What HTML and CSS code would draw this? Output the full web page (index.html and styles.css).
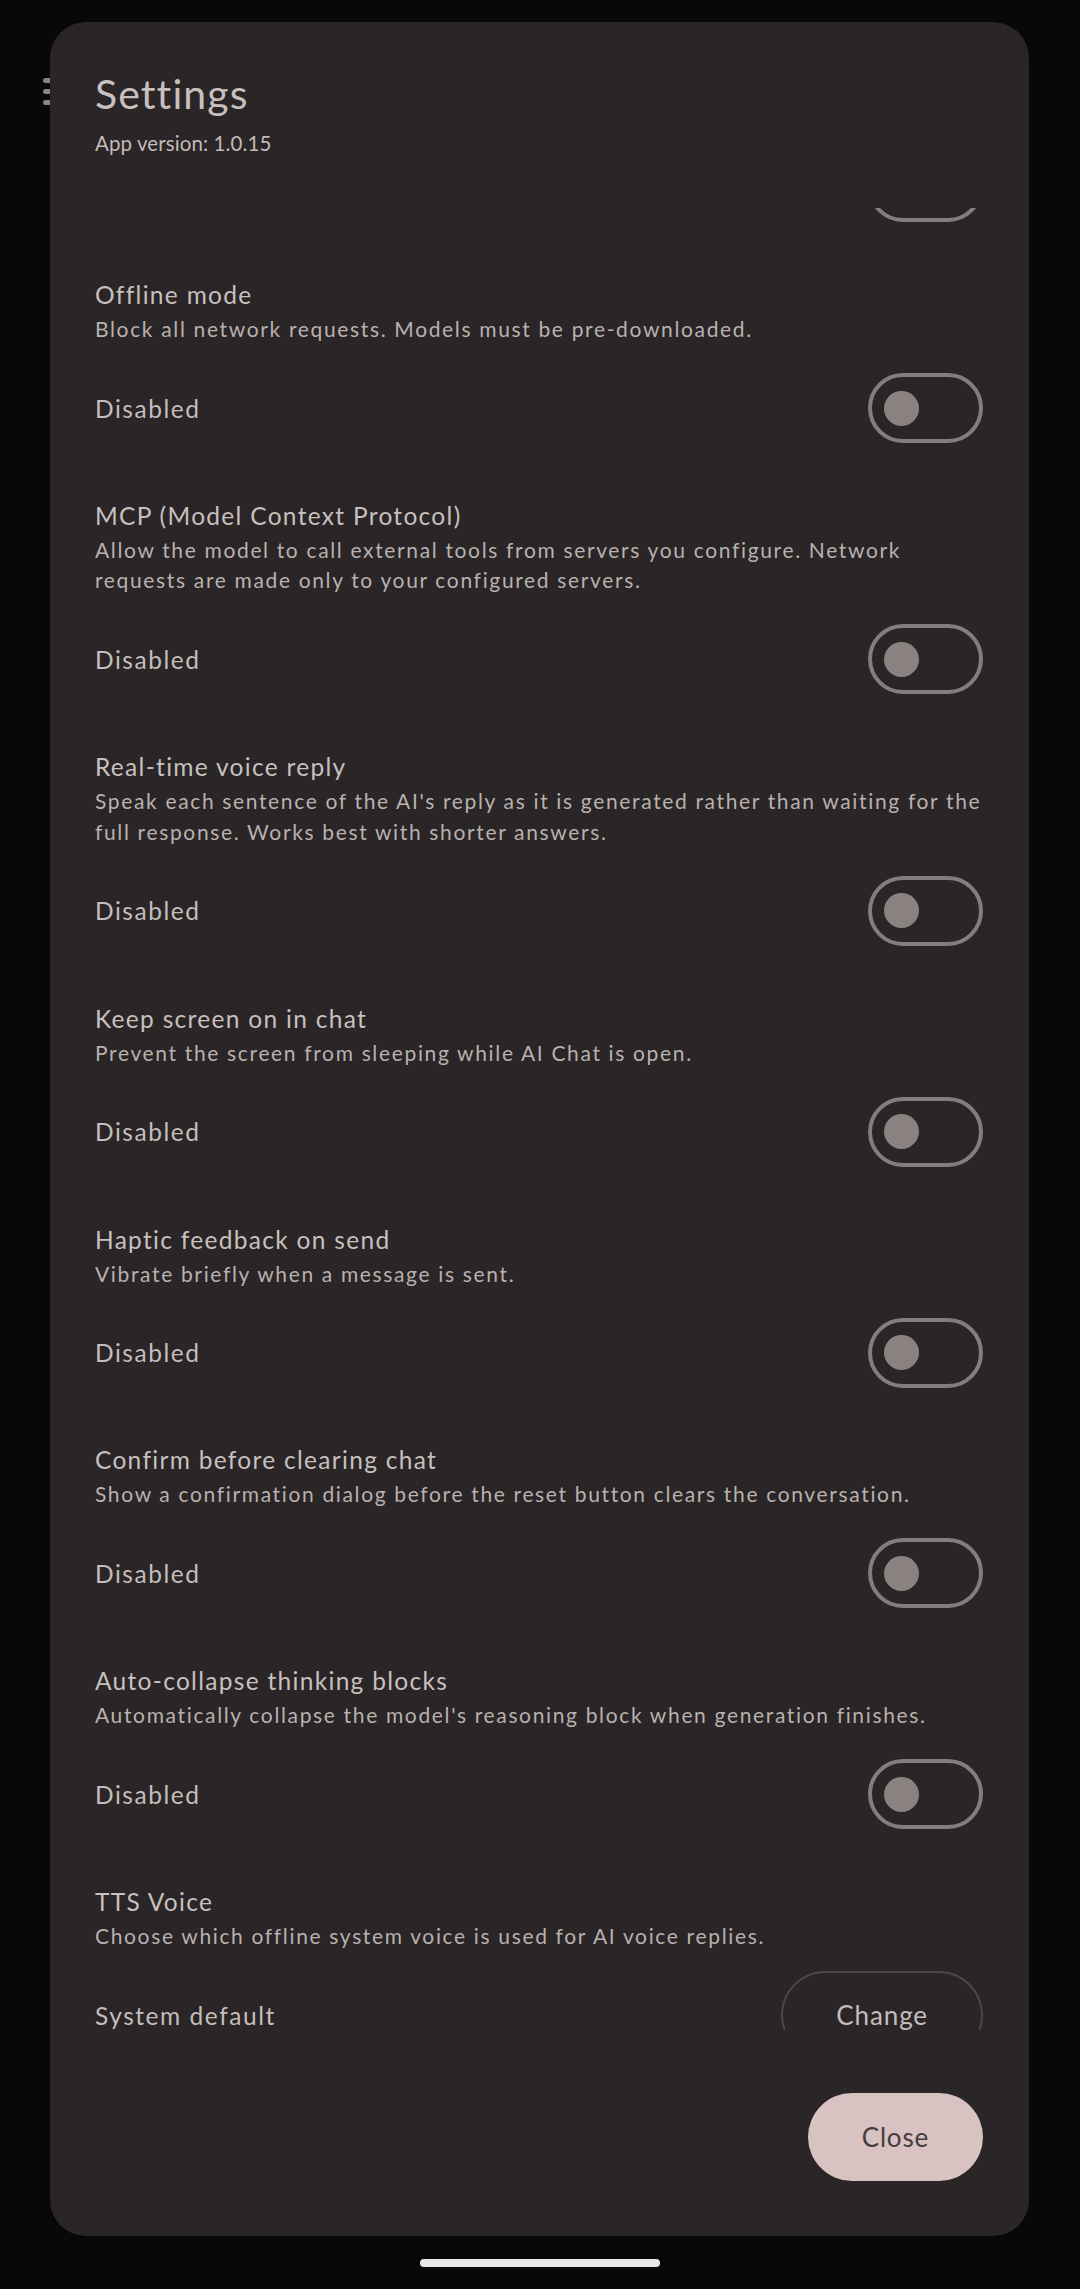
FILE: index.html
```html
<!DOCTYPE html>
<html lang="en">
<head>
<meta charset="utf-8">
<title>Settings</title>
<link rel="stylesheet" href="styles.css">
</head>
<body>
<div class="screen">
  <div class="menu-icon"><span></span><span></span><span></span></div>
  <div class="dialog">
    <header class="dialog-head">
      <h1 class="dialog-title">Settings</h1>
      <p class="app-version">App version: 1.0.15</p>
    </header>
    <div class="scroll">
      <div class="scroll-inner">
        <div class="row row-hidden"><span class="switch"><span class="thumb"></span></span></div>
        <section class="setting">
          <h2 class="setting-title">Offline mode</h2>
          <p class="setting-desc">Block all network requests. Models must be pre-downloaded.</p>
          <div class="row"><span class="value">Disabled</span><span class="switch"><span class="thumb"></span></span></div>
        </section>
        <section class="setting">
          <h2 class="setting-title">MCP (Model Context Protocol)</h2>
          <p class="setting-desc">Allow the model to call external tools from servers you configure. Network requests are made only to your configured servers.</p>
          <div class="row"><span class="value">Disabled</span><span class="switch"><span class="thumb"></span></span></div>
        </section>
        <section class="setting">
          <h2 class="setting-title">Real-time voice reply</h2>
          <p class="setting-desc">Speak each sentence of the AI's reply as it is generated rather than waiting for the full response. Works best with shorter answers.</p>
          <div class="row"><span class="value">Disabled</span><span class="switch"><span class="thumb"></span></span></div>
        </section>
        <section class="setting">
          <h2 class="setting-title">Keep screen on in chat</h2>
          <p class="setting-desc">Prevent the screen from sleeping while AI Chat is open.</p>
          <div class="row"><span class="value">Disabled</span><span class="switch"><span class="thumb"></span></span></div>
        </section>
        <section class="setting">
          <h2 class="setting-title">Haptic feedback on send</h2>
          <p class="setting-desc">Vibrate briefly when a message is sent.</p>
          <div class="row"><span class="value">Disabled</span><span class="switch"><span class="thumb"></span></span></div>
        </section>
        <section class="setting">
          <h2 class="setting-title">Confirm before clearing chat</h2>
          <p class="setting-desc">Show a confirmation dialog before the reset button clears the conversation.</p>
          <div class="row"><span class="value">Disabled</span><span class="switch"><span class="thumb"></span></span></div>
        </section>
        <section class="setting">
          <h2 class="setting-title">Auto-collapse thinking blocks</h2>
          <p class="setting-desc">Automatically collapse the model's reasoning block when generation finishes.</p>
          <div class="row"><span class="value">Disabled</span><span class="switch"><span class="thumb"></span></span></div>
        </section>
        <section class="setting">
          <h2 class="setting-title">TTS Voice</h2>
          <p class="setting-desc">Choose which offline system voice is used for AI voice replies.</p>
          <div class="row"><span class="value">System default</span><button class="btn-outline">Change</button></div>
        </section>
      </div>
    </div>
    <footer class="dialog-foot">
      <button class="btn-tonal">Close</button>
    </footer>
  </div>
  <div class="home-bar"></div>
</div>
</body>
</html>
```

FILE: styles.css
```css
* { box-sizing: border-box; }
html, body {
  margin: 0;
  padding: 0;
  background: #080808;
}
body {
  width: 1080px;
  height: 2289px;
  overflow: hidden;
  font-family: Lato, "Noto Sans", sans-serif;
  color: #c5bdbb;
}
.screen {
  position: relative;
  width: 1080px;
  height: 2289px;
  padding-top: 22px;
}
.menu-icon {
  position: absolute;
  left: 43px;
  top: 78px;
  width: 30px;
  display: flex;
  flex-direction: column;
  gap: 6px;
}
.menu-icon span {
  display: block;
  height: 5px;
  border-radius: 3px;
  background: #8b8482;
}
.dialog {
  position: relative;
  margin: 0 51px 0 50px;
  height: 2214px;
  background: #2a2526;
  border-radius: 36px;
  padding: 0 46px 0 45px;
  display: flex;
  flex-direction: column;
}
.dialog-head { padding-top: 46px; }
.dialog-title {
  margin: 0;
  font-size: 41px;
  line-height: 52px;
  font-weight: 400;
  letter-spacing: 1.1px;
  color: #c8c0be;
}
.app-version {
  margin: 9px 0 0;
  font-size: 20.5px;
  line-height: 28px;
  letter-spacing: 0.1px;
  color: #c2bab8;
}
.scroll {
  margin-top: 51px;
  height: 1822px;
  overflow: hidden;
  flex: none;
}
.scroll-inner { margin-top: -65px; }
.setting { margin-bottom: 44.9px; }
.setting-title {
  margin: 0;
  font-size: 24.5px;
  line-height: 38px;
  font-weight: 400;
  letter-spacing: 1.3px;
  color: #c8c0be;
}
.setting-desc {
  margin: 0 0 19.5px;
  font-size: 21px;
  line-height: 30.5px;
  letter-spacing: 1.65px;
  color: #b9b1af;
}
.row {
  height: 88px;
  display: flex;
  align-items: center;
  justify-content: space-between;
}
.row-hidden {
  justify-content: flex-end;
  margin-bottom: 45px;
}
.value {
  font-size: 24.5px;
  letter-spacing: 1.55px;
  color: #c5bdbb;
}
.switch {
  width: 115px;
  height: 70px;
  border: 4.5px solid #857d7b;
  border-radius: 35px;
  display: flex;
  align-items: center;
  padding-left: 12px;
}
.thumb {
  width: 35px;
  height: 35px;
  border-radius: 50%;
  background: #8a8280;
}
.btn-outline {
  height: 88px;
  padding: 0 53px;
  border: 2px solid #4f4849;
  border-radius: 44px;
  background: transparent;
  font-family: inherit;
  font-size: 26px;
  letter-spacing: 0.9px;
  color: #c4bcba;
}
.dialog-foot {
  margin-top: 63px;
  display: flex;
  justify-content: flex-end;
}
.btn-tonal {
  height: 88px;
  padding: 0 54px;
  border: none;
  border-radius: 44px;
  background: #d8c2c2;
  font-family: inherit;
  font-size: 26px;
  letter-spacing: 0.8px;
  color: #463c3d;
}
.home-bar {
  position: absolute;
  left: 420px;
  top: 2259px;
  width: 240px;
  height: 8px;
  border-radius: 4px;
  background: #e8e8e8;
}
```
